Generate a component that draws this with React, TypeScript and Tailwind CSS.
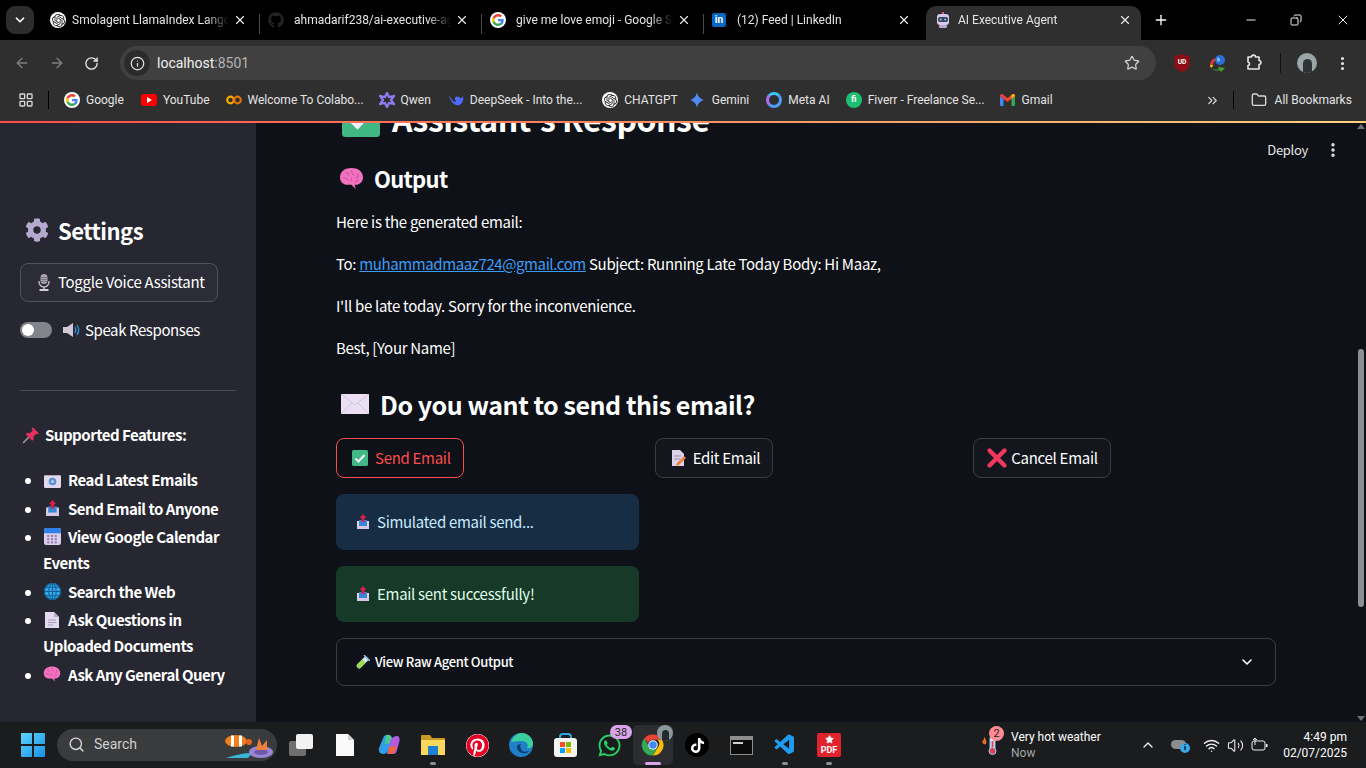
import React from "react";
import {
  ArrowLeft,
  ArrowRight,
  ChevronDown,
  ChevronUp,
  ChevronsRight,
  Copy,
  Folder,
  Info,
  LayoutGrid,
  Minus,
  MoreVertical,
  Plus,
  RotateCw,
  Search,
  Star,
  Volume2,
  Wifi,
  X,
} from "lucide-react";
import { FaCog, FaGithub, FaPinterest, FaTiktok, FaWhatsapp } from "react-icons/fa";
import { SiOpenai } from "react-icons/si";
import { VscVscode } from "react-icons/vsc";

const GoogleIcon = ({ size = 16 }: { size?: number }) => (
  <svg width={size} height={size} viewBox="0 0 48 48" className="shrink-0">
    <circle cx="24" cy="24" r="24" fill="#fff" />
    <path fill="#4285F4" d="M41 24.500c0-1.300-.1-2.500-.3-3.500H24v6.800h9.600c-.4 2.200-1.700 4.100-3.500 5.300v4.400h5.700C39.100 34.500 41 30 41 24.500z" />
    <path fill="#34A853" d="M24 42c4.800 0 8.800-1.600 11.800-4.400l-5.700-4.500c-1.600 1.100-3.600 1.700-6.100 1.700-4.600 0-8.600-3.100-10-7.300H8.100v4.600C11 37.900 17 42 24 42z" />
    <path fill="#FBBC05" d="M14 27.500c-.4-1.100-.6-2.300-.6-3.500s.2-2.400.6-3.500v-4.600H8.100C6.800 18.300 6 21.100 6 24s.8 5.700 2.100 8.100z" />
    <path fill="#EA4335" d="M24 13.200c2.600 0 5 .9 6.800 2.700l5.100-5.100C32.800 7.900 28.800 6 24 6 17 6 11 10.100 8.100 15.900l5.900 4.600c1.400-4.200 5.400-7.300 10-7.300z" />
  </svg>
);

const ChatIcon = () => (
  <span className="flex h-4 w-4 shrink-0 items-center justify-center rounded-full bg-white">
    <SiOpenai size={13} color="#222" />
  </span>
);

const RobotIcon = () => (
  <svg width="16" height="16" viewBox="0 0 16 16" className="shrink-0">
    <rect x="7" y="0" width="2" height="2" fill="#e05a8a" />
    <rect x="2" y="2" width="12" height="11" rx="3" fill="#d9c8ea" />
    <rect x="3" y="5" width="10" height="5" rx="2" fill="#39415f" />
    <circle cx="5.800" cy="7.500" r="1" fill="#7fd0f5" />
    <circle cx="10.200" cy="7.500" r="1" fill="#7fd0f5" />
    <rect x="4" y="13" width="8" height="3" rx="1" fill="#b9a7d2" />
  </svg>
);

const Tab = ({
  icon,
  title,
  width,
  iconBox,
  active,
}: {
  icon: React.ReactNode;
  title: string;
  width: string;
  iconBox: string;
  active?: boolean;
}) => (
  <div className={`relative flex h-[34px] shrink-0 items-center pb-[6px] ${width} ${active ? "rounded-t-[10px] bg-[#2f2f2f] pl-[9px] pr-[9px]" : "pl-[7px] pr-[11px]"}`}>
    <span className={`shrink-0 ${iconBox}`}>{icon}</span>
    <span className="min-w-0 flex-1 overflow-hidden whitespace-nowrap text-[12px] text-[#e4e4e4] [mask-image:linear-gradient(to_right,black_85%,transparent)]">
      {title}
    </span>
    <X size={14} color="#e8e8e8" strokeWidth={2} className="ml-1 shrink-0" />
  </div>
);

const TabDivider = () => <div className="mx-[1px] mb-[6px] h-[20px] w-[1px] shrink-0 bg-[#4b4b4b]" />;

const TabStrip = () => (
  <div className="flex h-10 items-end bg-black font-['Roboto',sans-serif]">
    <div className="mb-[6px] ml-[6px] mr-[9px] flex h-[28px] w-[28px] shrink-0 items-center justify-center rounded-[9px] bg-[#2c2c2c]">
      <ChevronDown size={14} color="#fff" strokeWidth={3} />
    </div>
    <div className="flex items-end">
      <Tab width="w-[215px]" iconBox="w-[22px]" title="Smolagent LlamaIndex Langchain" icon={<ChatIcon />} />
      <TabDivider />
      <Tab width="w-[219px]" iconBox="w-[26px]" title="ahmadarif238/ai-executive-agent" icon={<FaGithub size={16} color="#1f2328" />} />
      <TabDivider />
      <Tab width="w-[219px]" iconBox="w-[26px]" title="give me love emoji - Google Search" icon={<GoogleIcon />} />
      <TabDivider />
      <Tab width="w-[217px]" iconBox="w-[25px]" title="(12) Feed | LinkedIn" icon={<span className="flex h-[14px] w-[14px] items-center justify-center rounded-[2px] bg-[#0a66c2] text-[10px] font-bold leading-none text-white">in</span>} />
      <div className="w-[4px]" />
      <Tab active width="w-[215px]" iconBox="w-[23px]" title="AI Executive Agent" icon={<RobotIcon />} />
    </div>
    <div className="flex h-[34px] items-center pb-[6px] pl-[12px]">
      <Plus size={16} color="#fff" strokeWidth={2} />
    </div>
    <div className="ml-auto flex h-[34px] items-center pb-[6px] pr-[15px]">
      <Minus size={14} color="#eee" />
      <Copy size={12} color="#eee" className="ml-[32px] -scale-x-100" />
      <X size={16} color="#eee" strokeWidth={1.5} className="ml-[33px]" />
    </div>
  </div>
);

const DownloaderIcon = () => (
  <svg width="18" height="18" viewBox="0 0 18 18">
    <path d="M1 11c0-3 2-6 5-7l1 2c-2 1-3 3-3 5z" fill="#e3342f" />
    <path d="M1 11c0 1 .5 2 1 3l2-2c-.2-.4 0-1 0-1z" fill="#f5c518" />
    <circle cx="11" cy="6" r="5" fill="#2a6fd6" />
    <path d="M8 4c2-1 3 0 3 2s-2 2-3 1z" fill="#7fb7f0" />
    <path d="M3 14c2 2 5 2 7 1l-1-2 7 1-4 4-1-2c-3 1-6 1-8-2z" fill="#43a82c" />
  </svg>
);

const ExtensionIcon = () => (
  <svg width="18" height="18" viewBox="0 0 18 18" fill="none" stroke="#e6e6e6" strokeWidth="1.600" strokeLinejoin="round">
    <path d="M3 3h3.500c0-2.500 4-2.500 4 0H14v3.500c2.500 0 2.500 4 0 4V15H3v-3.500c2 0 2-3.500 0-3.500z" />
  </svg>
);

const GmailIcon = () => (
  <svg width="15" height="12" viewBox="0 0 15 12">
    <path d="M0 2v9a1 1 0 0 0 1 1h2.500V5z" fill="#4285f4" />
    <path d="M15 2v9a1 1 0 0 1-1 1h-2.500V5z" fill="#34a853" />
    <path d="M0 2c0-1.500 1.500-2.500 3-1.500L7.500 4 12 .5c1.500-1 3 0 3 1.500l-3.500 3-4 3-4-3z" fill="#ea4335" />
    <path d="M12 .5c1.500-1 3 0 3 1.500l-3.500 3V1z" fill="#fbbc04" />
  </svg>
);

const Toolbar = () => (
  <div className="flex h-11 items-center bg-[#2f2f2f] pt-[2px] font-['Roboto',sans-serif]">
    <div className="flex w-[120px] shrink-0 items-center gap-[19px] pl-[14px]">
      <ArrowLeft size={16} color="#7f7f7f" />
      <ArrowRight size={16} color="#7f7f7f" />
      <RotateCw size={15} color="#e3e3e3" strokeWidth={2.2} />
    </div>
    <div className="flex h-[34px] w-[1036px] shrink-0 items-center rounded-full bg-[#404040] pl-[4px] pr-[16px]">
      <span className="flex h-[26px] w-[26px] items-center justify-center rounded-full bg-[#2b2b2b]">
        <Info size={15} color="#e3e3e3" />
      </span>
      <span className="ml-[7px] text-[14px] text-[#f1f1f1]">
        localhost<span className="text-[#b4b4b4]">:8501</span>
      </span>
      <Star size={16} color="#d6d6d6" strokeWidth={1.8} className="ml-auto" />
    </div>
    <div className="ml-[17px] flex items-center">
      <svg width="18" height="20" viewBox="0 0 16 18">
        <path d="M8 1 15 3v7c0 4-3 6-7 7-4-1-7-3-7-7V3z" fill="#8a1015" />
        <text x="8" y="10" fontSize="6" fontWeight="700" fill="#fff" textAnchor="middle">UD</text>
      </svg>
      <span className="ml-[18px]"><DownloaderIcon /></span>
      <span className="ml-[18px]"><ExtensionIcon /></span>
      <span className="ml-[17px] h-[20px] w-[1px] bg-[#111]" />
      <span className="ml-[16px] flex h-[20px] w-[20px] items-center justify-center overflow-hidden rounded-full bg-[#9aa5a8]">
        <span className="mt-[6px] h-[14px] w-[9px] rounded-t-full bg-[#2c3336]" />
      </span>
      <MoreVertical size={17} color="#e6e6e6" strokeWidth={2.4} className="ml-[17px]" />
    </div>
  </div>
);

const Mark = ({ icon, label, ml }: { icon: React.ReactNode; label: string; ml: string }) => (
  <div className={`flex shrink-0 items-center ${ml}`}>
    <span className="flex w-[22px] shrink-0 items-center">{icon}</span>
    <span className="whitespace-nowrap text-[12px] text-[#e4e4e4]">{label}</span>
  </div>
);

const BookmarksBar = () => (
  <div className="flex h-[37px] items-center bg-[#2f2f2f] pb-[5px] font-['Roboto',sans-serif]">
    <LayoutGrid size={16} color="#d8d8d8" className="ml-[18px] shrink-0" />
    <span className="ml-[14px] h-[18px] w-[1px] shrink-0 bg-black" />
    <Mark ml="ml-[15px]" label="Google" icon={<GoogleIcon />} />
    <Mark ml="ml-[17px]" label="YouTube" icon={<span className="flex h-[12px] w-[16px] items-center justify-center rounded-[3px] bg-[#f00]"><span className="ml-[1px] h-0 w-0 border-y-[3px] border-l-[5px] border-y-transparent border-l-white" /></span>} />
    <Mark ml="ml-[16px]" label="Welcome To Colabo..." icon={<svg width="16" height="10" viewBox="0 0 16 10"><circle cx="4.500" cy="5" r="3.300" fill="none" stroke="#f9ab00" strokeWidth="2.200" /><circle cx="11.500" cy="5" r="3.300" fill="none" stroke="#e8710a" strokeWidth="2.200" /></svg>} />
    <Mark ml="ml-[15px]" label="Qwen" icon={<svg width="16" height="16" viewBox="0 0 16 16"><path d="M8 1 10 5l5-1-3 4 3 4-5-1-2 4-2-4-5 1 3-4-3-4 5 1z" fill="none" stroke="#8d7cf6" strokeWidth="2.200" /></svg>} />
    <Mark ml="ml-[17px]" label="DeepSeek - Into the..." icon={<svg width="16" height="14" viewBox="0 0 16 14"><path d="M1 2c1 6 5 11 10 10 3-1 5-4 4-9-1 2-2 2-3 2-2-2-5-2-5 1 0 1 1 2 1 3-3 0-5-3-7-7z" fill="#4d6bfe" /></svg>} />
    <Mark ml="ml-[20px]" label="CHATGPT" icon={<ChatIcon />} />
    <Mark ml="ml-[12px]" label="Gemini" icon={<svg width="14" height="16" viewBox="0 0 14 16"><path d="M7 0c.7 4 2.500 6.500 7 8-4.500 1.500-6.300 4-7 8-.7-4-2.500-6.500-7-8 4.500-1.500 6.300-4 7-8z" fill="#4f8df5" /></svg>} />
    <Mark ml="ml-[17px]" label="Meta AI" icon={<span className="block h-4 w-4 rounded-full border-[3px] border-[#4d9df5] border-l-[#a970ef] border-t-[#38c6f4]" />} />
    <Mark ml="ml-[16px]" label="Fiverr - Freelance Se..." icon={<span className="flex h-4 w-4 items-center justify-center rounded-full bg-[#1dbf73] text-[9px] font-bold text-white">fi</span>} />
    <Mark ml="ml-[15px]" label="Gmail" icon={<GmailIcon />} />
    <ChevronsRight size={15} color="#d8d8d8" className="ml-[152px] shrink-0" />
    <span className="ml-[13px] h-[18px] w-[1px] shrink-0 bg-black" />
    <Folder size={16} color="#d8d8d8" className="ml-[17px] shrink-0" />
    <span className="ml-[8px] whitespace-nowrap text-[12px] text-[#e4e4e4]">All Bookmarks</span>
  </div>
);

const GearEmoji = () => <FaCog size={24} color="#b5a9cf" />;

const MicEmoji = () => (
  <svg width="12" height="17" viewBox="0 0 12 17" className="shrink-0">
    <rect x="2.500" y="0" width="7" height="10" rx="3.500" fill="#a9a4ae" />
    <path d="M2.500 3.500h7M2.500 5.500h7M2.500 7.500h7" stroke="#6e6a74" strokeWidth="0.800" />
    <path d="M1 7v1a5 5 0 0 0 10 0V7" fill="none" stroke="#d4d0d8" strokeWidth="1.200" />
    <path d="M6 13v2" stroke="#d4d0d8" strokeWidth="1.400" />
    <rect x="1.500" y="15" width="9" height="2" rx="0.500" fill="#d4d0d8" />
  </svg>
);

const BrainEmoji = ({ size = 16 }: { size?: number }) => (
  <svg width={size} height={size} viewBox="0 0 24 24" className="shrink-0">
    <path d="M1 11C1 5 6 2 12 2s11 3 11 9c0 4-3 7-7 7h-1l1 4-4-4H8c-4 0-7-3-7-7z" fill="#f272c0" />
    <path d="M6 6c2 0 3 1 3 3M12 4c0 3 1 4 3 5M18 7c1 2 0 4-2 5M4 12c2-1 4 0 5 2M12 11c0 2 0 3-1 4M19 13c-1 1-2 2-4 2" fill="none" stroke="#d253a4" strokeWidth="1.100" />
  </svg>
);

const MailEmoji = () => (
  <svg width="17" height="13" viewBox="0 0 16 12" className="shrink-0">
    <rect width="16" height="12" rx="1" fill="#e2d8ee" />
    <circle cx="8" cy="6" r="3.600" fill="#5b8fd6" />
    <circle cx="8" cy="6" r="1.500" fill="#b8d0f2" />
  </svg>
);

const OutboxEmoji = ({ size = 16 }: { size?: number }) => (
  <svg width={size} height={size} viewBox="0 0 16 16" className="shrink-0">
    <path d="M2 7h12v8H2z" fill="#e0d4ec" />
    <path d="M4 6h8v6H4z" fill="#3a87d5" />
    <path d="M8 0 11.500 4H9.500v4h-3V4H4.500z" fill="#d3204f" />
    <path d="M2 12h12v3H2z" fill="#d6c8e6" />
  </svg>
);

const CalendarEmoji = () => (
  <svg width="17" height="17" viewBox="0 0 16 16" className="shrink-0">
    <rect width="16" height="16" rx="2" fill="#dbcfec" />
    <path d="M0 5V2a2 2 0 0 1 2-2h12a2 2 0 0 1 2 2v3z" fill="#2f80e8" />
    {[3, 6.5, 10].map((x) => [7, 10, 13].map((y) => <rect key={`${x}-${y}`} x={x} y={y - 0.5} width="2" height="2" fill="#8f84ad" />))}
  </svg>
);

const GlobeEmoji = () => (
  <svg width="17" height="17" viewBox="0 0 16 16" className="shrink-0">
    <circle cx="8" cy="8" r="8" fill="#38a8e8" />
    <g fill="none" stroke="#0d5f96" strokeWidth="1">
      <circle cx="8" cy="8" r="7.500" />
      <ellipse cx="8" cy="8" rx="3.500" ry="7.500" />
      <path d="M8 .5v15M.5 8h15M2 4h12M2 12h12" />
    </g>
  </svg>
);

const DocEmoji = () => (
  <svg width="14" height="16" viewBox="0 0 14 16" className="shrink-0">
    <path d="M0 0h9l5 5v11H0z" fill="#e4daf0" />
    <path d="M9 0l5 5H9z" fill="#b9abcf" />
    <path d="M3 8h8M3 10.500h8M3 13h5" stroke="#a99cba" strokeWidth="1" />
  </svg>
);

const PinEmoji = () => (
  <svg width="18" height="18" viewBox="0 0 16 16" className="shrink-0">
    <path d="M1 15 7 9" stroke="#9a95a3" strokeWidth="1.300" />
    <path d="M9.500 1 15 6.500l-1.500 1-1-.5L10 9.500l.5 2.500-1.500 1L3.500 7.500l1-1.500 2.500.5L9.500 4l-.8-1.500z" fill="#e8305f" />
  </svg>
);

const SpeakerEmoji = () => (
  <svg width="17" height="14" viewBox="0 0 17 14" className="shrink-0">
    <path d="M0 4h4l6-4v14L4 10H0z" fill="#cfc9d6" />
    <path d="M12 4c1 2 1 4 0 6M14 2c2 3 2 7 0 10" fill="none" stroke="#2f9ae8" strokeWidth="1.300" />
  </svg>
);

const CheckEmoji = ({ size = 16 }: { size?: number }) => (
  <svg width={size} height={size} viewBox="0 0 16 16" className="shrink-0">
    <rect width="16" height="16" rx="1.500" fill="#41b883" />
    <path d="M3.500 8.500 6.500 11.500 12.500 5" fill="none" stroke="#f3eefc" strokeWidth="2" />
  </svg>
);

const EnvelopeEmoji = () => (
  <svg width="28" height="20" viewBox="0 0 28 20" className="shrink-0">
    <rect width="28" height="20" rx="1" fill="#ebe0f3" />
    <path d="M0 0 14 11 28 0M0 20 11 9M28 20 17 9" fill="none" stroke="#cdbfdc" strokeWidth="0.800" />
  </svg>
);

const MemoEmoji = () => (
  <svg width="14" height="16" viewBox="0 0 14 16" className="ml-[1px] shrink-0">
    <path d="M0 0h8l4 4v12H0z" fill="#ded1ea" />
    <path d="M2 6h7M2 9h6" stroke="#9b8cae" />
    <path d="M5 13 12 6l2 2-7 7-3 1z" fill="#f07e3c" />
  </svg>
);

const TubeEmoji = () => (
  <svg width="14" height="14" viewBox="0 0 14 14" className="shrink-0">
    <path d="M9 1.500 12.500 5 5 12.500a2.400 2.400 0 0 1-3.500-3.500z" fill="#d9e8f0" />
    <path d="M6.500 4.500 9.500 7.500 5 12.500a2.400 2.400 0 0 1-3.500-3.500z" fill="#9ad84e" />
    <path d="M8 .5h1l4.500 4.500v1z" fill="#8fd0f0" stroke="#8fd0f0" />
  </svg>
);

const Feature = ({ icon, children }: { icon: React.ReactNode; children: React.ReactNode }) => (
  <li className="relative mb-[2.500px] ml-[23px] list-disc leading-[26px] tracking-[-0.5px] marker:text-white">
    <span className="mr-[7px] inline-flex w-[18px] items-center justify-center align-[-2px]">{icon}</span>
    {children}
  </li>
);

const Sidebar = () => (
  <aside className="relative flex w-[256px] shrink-0 flex-col overflow-hidden bg-[#262730] pl-5 pr-5 text-white">
    <div className="mt-[92px] flex h-[30px] items-center">
      <span className="ml-[5px] mr-[9px]"><GearEmoji /></span>
      <h2 className="text-[22px] font-semibold leading-none tracking-[-0.5px]">Settings</h2>
    </div>
    <button className="mt-[18px] flex h-[39px] w-[198px] items-center whitespace-nowrap rounded-lg border border-[#50525c] bg-[#2b2c36] pl-[17px]">
      <span className="mr-[8px]"><MicEmoji /></span>
      Toggle Voice Assistant
    </button>
    <div className="mt-[20px] flex h-4 items-center">
      <span className="flex h-4 w-8 items-center rounded-full bg-[#83838b] pl-[2px]">
        <span className="h-3 w-3 rounded-full bg-white" />
      </span>
      <span className="ml-[11px] mr-[5px]"><SpeakerEmoji /></span>
      <span className="tracking-[-0.4px]">Speak Responses</span>
    </div>
    <hr className="mt-[52px] w-[216px] border-[#4b4c55]" />
    <div className="mt-[33px] flex h-[22px] items-center font-semibold tracking-[-0.5px]">
      <span className="ml-[2px] mr-[5px]"><PinEmoji /></span>
      Supported Features:
    </div>
    <ul className="mt-[21px] w-[216px] font-semibold">
      <Feature icon={<MailEmoji />}>Read Latest Emails</Feature>
      <Feature icon={<OutboxEmoji size={17} />}>Send Email to Anyone</Feature>
      <Feature icon={<CalendarEmoji />}>View Google Calendar Events</Feature>
      <Feature icon={<GlobeEmoji />}>Search the Web</Feature>
      <Feature icon={<DocEmoji />}>Ask Questions in Uploaded Documents</Feature>
      <Feature icon={<BrainEmoji size={18} />}>Ask Any General Query</Feature>
    </ul>
  </aside>
);

const Alert = ({ bg, color, children }: { bg: string; color: string; children: React.ReactNode }) => (
  <div className={`flex h-14 w-[303px] items-center rounded-lg pl-[19px] ${bg} ${color}`}>
    <span className="mr-[6px]"><OutboxEmoji /></span>
    {children}
  </div>
);

const ActionButton = ({
  icon,
  label,
  primary,
}: {
  icon: React.ReactNode;
  label: string;
  primary?: boolean;
}) => (
  <button
    className={`flex h-10 w-fit items-center gap-[7px] whitespace-nowrap rounded-lg border pl-[15px] pr-[12px] ${
      primary ? "border-[#ff4b4b] text-[#ff4b4b]" : "border-[#3b3d45] bg-[#14161d] text-white"
    }`}
  >
    {icon}
    {label}
  </button>
);

const Main = () => (
  <main className="relative min-w-0 flex-1 overflow-hidden bg-[#0e1117] pl-[80px] pr-[80px] text-white">
    <div className="-mt-[25px] flex h-[40px] items-center">
      <span className="ml-[6px] mr-[12px]"><CheckEmoji size={38} /></span>
      <h1 className="whitespace-nowrap text-[32px] font-semibold leading-none tracking-[-0.5px]">Assistant's Response</h1>
    </div>
    <div className="mt-[22px] flex h-[36px] items-center">
      <span className="ml-[3px] mr-[10px]"><BrainEmoji size={25} /></span>
      <h3 className="text-[22px] font-semibold leading-none tracking-[-0.7px]">Output</h3>
    </div>
    <div className="mt-[13px] leading-[26px]">
      <p>Here is the generated email:</p>
      <p className="mt-4">
        To: <a className="tracking-[-0.4px] text-[#3d9df6] underline">muhammadmaaz724@gmail.com</a> Subject: Running Late Today Body: Hi Maaz,
      </p>
      <p className="mt-4">I'll be late today. Sorry for the inconvenience.</p>
      <p className="mt-4">Best, [Your Name]</p>
    </div>
    <div className="mt-[23px] flex h-[40px] items-center">
      <span className="ml-[5px] mr-[11px]"><EnvelopeEmoji /></span>
      <h2 className="text-[25px] font-semibold leading-none tracking-[-0.45px]">Do you want to send this email?</h2>
    </div>
    <div className="mt-[14px] grid w-[940px] grid-cols-3 gap-4">
      <ActionButton primary label="Send Email" icon={<CheckEmoji />} />
      <ActionButton label="Edit Email" icon={<MemoEmoji />} />
      <ActionButton label="Cancel Email" icon={<X size={30} color="#f2385e" strokeWidth={3.5} className="-ml-[7px] -mr-[8px] shrink-0" />} />
    </div>
    <div className="mt-4 flex flex-col gap-4">
      <Alert bg="bg-[#172d43]" color="text-[#c7ebff]">Simulated email send...</Alert>
      <Alert bg="bg-[#173928]" color="text-[#dffde9]">Email sent successfully!</Alert>
    </div>
    <div className="mt-4 flex h-12 w-[940px] items-center rounded-lg border border-[#3b3d45] pl-[19px] pr-[20px] text-[13px] font-medium tracking-[-0.35px]">
      <span className="mr-[5px]"><TubeEmoji /></span>
      View Raw Agent Output
      <ChevronDown size={16} color="#fff" strokeWidth={2.4} className="ml-auto" />
    </div>
    <div className="absolute right-[24px] top-[17px] flex items-center gap-[16px] text-[13px] text-[#e6e6e6]">
      <span>Deploy</span>
      <MoreVertical size={18} strokeWidth={2.6} />
    </div>
    <div className="absolute bottom-0 right-0 top-0 flex w-[10px] flex-col items-center">
      <span className="mt-[1px] h-0 w-0 border-x-[4px] border-b-[5px] border-x-transparent border-b-[#6f7176]" />
      <div className="mt-[220px] h-[258px] w-[6px] rounded-full bg-[#8d8f94]" />
      <span className="mb-[1px] mt-auto h-0 w-0 border-x-[4px] border-t-[5px] border-x-transparent border-t-[#6f7176]" />
    </div>
  </main>
);

const WinLogo = () => (
  <svg width="24" height="24" viewBox="0 0 24 24">
    <defs>
      <linearGradient id="win" x1="0" y1="0" x2="1" y2="1">
        <stop offset="0" stopColor="#5fd3fb" />
        <stop offset="1" stopColor="#1690e6" />
      </linearGradient>
    </defs>
    <path d="M0 1a1 1 0 0 1 1-1h10v11H0zM13 0h10a1 1 0 0 1 1 1v10H13zM0 13h11v11H1a1 1 0 0 1-1-1zM13 13h11v10a1 1 0 0 1-1 1H13z" fill="url(#win)" />
  </svg>
);

const Fish = () => (
  <svg width="50" height="26" viewBox="0 0 50 26">
    <ellipse cx="12" cy="8" rx="11" ry="6" fill="#f07f1c" />
    <path d="M7 2.500h3v11H7zM15 2.500h3v11h-3z" fill="#fff" />
    <circle cx="25" cy="9" r="3" fill="#e8641c" />
    <path d="M2 25c8-3 18-5 26-5l-4 5z" fill="#38b6d8" />
    <ellipse cx="37" cy="19" rx="12" ry="6" fill="#9a84d8" />
    <ellipse cx="37" cy="19" rx="7" ry="3" fill="#6d5aa8" />
    <path d="M32 17 35 5l3 8 5-6 0 10z" fill="#f07f3c" />
  </svg>
);

const Slot = ({ children, dot, active }: { children?: React.ReactNode; dot?: boolean; active?: boolean }) => (
  <div className={`relative flex h-10 w-10 shrink-0 items-center justify-center rounded-[5px] ${active ? "bg-[#2b2d30]" : ""}`}>
    {children}
    {dot && <span className="absolute bottom-0 left-[17px] h-[3px] w-[6px] rounded-full bg-[#8f8f8f]" />}
    {active && <span className="absolute bottom-0 left-[12px] h-[3px] w-[16px] rounded-full bg-[#d9a5e8]" />}
  </div>
);

const Taskbar = () => (
  <div className="flex h-[46px] items-center bg-[#1b1c1e] font-['Roboto',sans-serif] text-white">
    <span className="ml-[21px] shrink-0"><WinLogo /></span>
    <div className="relative ml-[12px] flex h-8 w-[220px] shrink-0 items-center rounded-full bg-[#3a3b3c] pb-[2px] pl-[11px]">
      <Search size={17} color="#d8d8d8" />
      <span className="ml-[9px] text-[14px] text-[#cfcfcf]">Search</span>
      <span className="absolute bottom-[2px] right-[3px]"><Fish /></span>
    </div>
    <div className="ml-[4px] flex gap-1">
      <Slot>
        <span className="relative block h-[22px] w-[24px]">
          <span className="absolute bottom-0 left-0 h-[15px] w-[17px] rounded-[2px] bg-[#6f6f6f]" />
          <span className="absolute right-0 top-0 h-[15px] w-[17px] rounded-[2px] bg-[#f2f2f2]" />
        </span>
      </Slot>
      <Slot>
        <svg width="18" height="22" viewBox="0 0 18 22"><path d="M0 0h12l6 6v16H0z" fill="#fafafa" /><path d="M12 0l6 6h-6z" fill="#cfcfcf" /></svg>
      </Slot>
      <Slot>
        <svg width="22" height="22" viewBox="0 0 22 22">
          <path d="M6 2c3-2 7-1 8 2l-3 11c-1 3-3 5-6 5-3 0-5-3-4-6z" fill="#2f9fe8" />
          <path d="M8 1c3-1 5 0 6 3l-1 5-6 1z" fill="#48c98e" />
          <path d="M15 20H9l3-12c1-4 4-6 7-6 2 0 3 2 2.500 5L19 16c-.5 3-2 4-4 4z" fill="#b05ce0" />
          <path d="M10 20c3 0 6 0 7-3l2-5-8 1z" fill="#f0653a" />
        </svg>
      </Slot>
      <Slot dot>
        <svg width="24" height="22" viewBox="0 0 24 22">
          <path d="M0 2a1 1 0 0 1 1-1h8l2 3h13v17H0z" fill="#c79a22" />
          <path d="M0 6h24v15H0z" fill="#fbd75c" />
          <rect x="7" y="12" width="10" height="9" fill="#1f7fd1" />
        </svg>
      </Slot>
      <Slot><FaPinterest size={23} color="#e60023" className="rounded-full bg-white" /></Slot>
      <Slot>
        <svg width="24" height="24" viewBox="0 0 24 24">
          <circle cx="12" cy="12" r="12" fill="#1f7fc9" />
          <path d="M2 9C4 3 9 0 13 0c6 0 11 5 11 11 0 3-3 5-6 4 2-3 0-7-5-7-5 0-9 1-11 1z" fill="#3ccf9e" />
          <path d="M8 14c0 4 4 7 9 6 1 0 2-1 3-2-4 1-7 1-8-2-1-2-1-4 0-5-2 0-4 1-4 3z" fill="#0c3e6e" />
        </svg>
      </Slot>
      <Slot>
        <span className="relative block h-[24px] w-[23px]">
          <span className="absolute left-[5px] top-0 h-[9px] w-[13px] rounded-t-[4px] border-2 border-b-0 border-[#2ca5e0]" />
          <span className="absolute bottom-0 left-0 grid h-[19px] w-[23px] grid-cols-2 place-content-center gap-[1px] rounded-[3px] bg-[#f3f3f3] px-[6px]">
            <span className="h-[5px] bg-[#f25022]" />
            <span className="h-[5px] bg-[#7fba00]" />
            <span className="h-[5px] bg-[#00a4ef]" />
            <span className="h-[5px] bg-[#ffb900]" />
          </span>
        </span>
      </Slot>
      <Slot>
        <FaWhatsapp size={25} color="#25d366" />
        <span className="absolute right-[-3px] top-0 flex h-[14px] w-[22px] items-center justify-center rounded-full bg-[#d9a5e8] text-[11px] leading-none text-[#222]">38</span>
      </Slot>
      <Slot active>
        <svg width="24" height="24" viewBox="0 0 48 48">
          <path d="M24 3a21 21 0 0 1 18.200 10.500H24a10.500 10.500 0 0 0-9.700 6.500L6.500 10.500A21 21 0 0 1 24 3z" fill="#ea4335" />
          <path d="M42.200 13.500A21 21 0 0 1 24 45l9-15.500a10.500 10.500 0 0 0 0-16z" fill="#fbbc04" />
          <path d="M24 45A21 21 0 0 1 6.500 10.500L15 25.500a10.500 10.500 0 0 0 18 4z" fill="#34a853" />
          <circle cx="24" cy="24" r="9.500" fill="#fff" />
          <circle cx="24" cy="24" r="7.500" fill="#4285f4" />
        </svg>
        <span className="absolute right-0 top-0 flex h-[16px] w-[16px] items-end justify-center overflow-hidden rounded-full bg-[#8b979b]">
          <span className="h-[11px] w-[7px] rounded-t-full bg-[#222a2d]" />
        </span>
      </Slot>
      <Slot>
        <span className="flex h-6 w-6 items-center justify-center rounded-full bg-black"><FaTiktok size={15} color="#fff" /></span>
      </Slot>
      <Slot>
        <span className="block h-[19px] w-[23px] border border-[#8d8d8d] bg-[#0b0b0b]">
          <span className="block h-[3px] bg-[#8d8d8d]" />
          <span className="ml-[2px] mt-[2px] block h-[2px] w-[10px] bg-[#cfcfcf]" />
        </span>
      </Slot>
      <Slot dot><VscVscode size={24} color="#1f9cf0" /></Slot>
      <Slot dot>
        <span className="flex h-6 w-6 flex-col items-center justify-end rounded-[2px] bg-[#e1232e] pb-[2px] text-[9px] font-bold leading-none text-white">
          <Star size={9} fill="#fff" color="#fff" className="mb-[2px]" />
          PDF
        </span>
      </Slot>
    </div>
    <div className="relative ml-[130px] flex shrink-0 items-center">
      <svg width="24" height="24" viewBox="0 0 24 24">
        <path d="M3 9c2-2 2-4 2-5 2 2 3 4 2 7a3 3 0 0 1-4-2z" fill="#f06a28" />
        <rect x="11" y="3" width="5" height="17" rx="2.500" fill="#e8f3fa" stroke="#7cc4ee" />
        <rect x="12.500" y="8" width="2" height="10" fill="#e03e52" />
        <circle cx="13.500" cy="18" r="3.500" fill="#e03e52" stroke="#9bd0f0" />
      </svg>
      <span className="absolute left-[10px] top-[-3px] flex h-[15px] w-[15px] items-center justify-center rounded-full bg-[#ff8a94] text-[11px] leading-none text-[#222]">2</span>
      <div className="ml-[8px] w-[110px] leading-[16px]">
        <div className="whitespace-nowrap text-[12px]">Very hot weather</div>
        <div className="text-[12px] text-[#a5a5a5]">Now</div>
      </div>
    </div>
    <ChevronUp size={16} color="#eee" strokeWidth={2} className="ml-[19px] shrink-0" />
    <span className="relative ml-[15px] block h-[14px] w-[18px] shrink-0">
      <span className="absolute left-0 top-[2px] h-[9px] w-[15px] rounded-full bg-[#8c8c8c]" />
      <span className="absolute bottom-[-1px] right-[-1px] flex h-[10px] w-[10px] items-center justify-center rounded-full bg-[#3aa7e8] text-[8px] font-bold leading-none text-black">i</span>
    </span>
    <Wifi size={17} color="#eee" className="ml-[14px] shrink-0" />
    <Volume2 size={17} color="#eee" strokeWidth={1.5} className="ml-[7px] shrink-0" />
    <svg width="18" height="14" viewBox="0 0 18 14" className="ml-[7px] shrink-0">
      <rect x="1" y="3" width="13" height="9" rx="2" fill="none" stroke="#eee" />
      <rect x="15" y="6" width="1.500" height="3" fill="#eee" />
      <path d="M4 0v7M2 2l2-2 2 2" fill="none" stroke="#eee" />
    </svg>
    <div className="ml-auto pr-[19px] text-right text-[12px] leading-[16px]">
      <div>4:49 pm</div>
      <div>02/07/2025</div>
    </div>
  </div>
);

export default function App() {
  return (
    <div className="flex h-[768px] w-[1366px] flex-col overflow-hidden bg-black">
      <TabStrip />
      <Toolbar />
      <BookmarksBar />
      <div className="h-[2px] shrink-0 bg-[linear-gradient(to_right,#ff4b4b,#ffd27a)]" />
      <div className="flex min-h-0 flex-1 font-['Noto_Sans_CJK_SC','Noto_Sans',sans-serif] text-[15px] tracking-[-0.3px]">
        <Sidebar />
        <Main />
      </div>
      <Taskbar />
    </div>
  );
}
